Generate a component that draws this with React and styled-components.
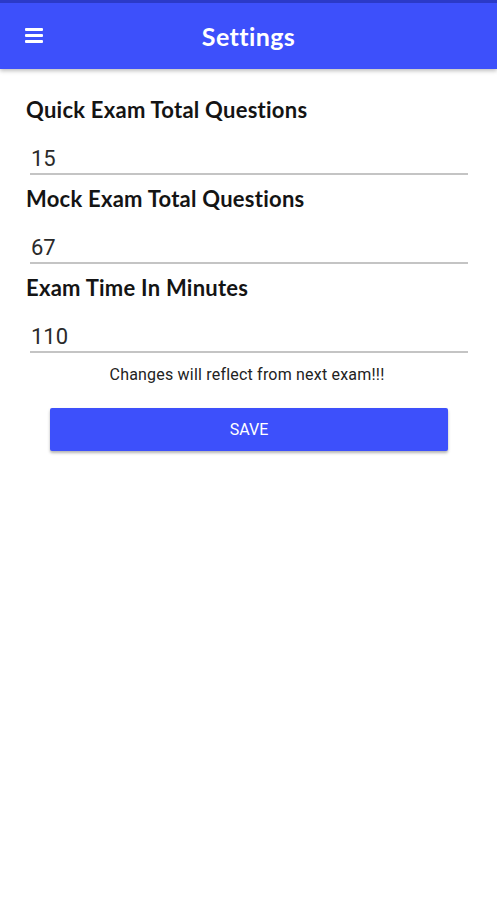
import React, { useState } from 'react';
import styled, { createGlobalStyle } from 'styled-components';

const GlobalStyle = createGlobalStyle`
  body {
    margin: 0;
    background: #fff;
    font-family: Lato, 'Noto Sans', sans-serif;
  }
`;

const fields = [
  { id: 'quick', label: 'Quick Exam Total Questions', value: '15' },
  { id: 'mock', label: 'Mock Exam Total Questions', value: '67' },
  { id: 'time', label: 'Exam Time In Minutes', value: '110' },
];

const App = () => {
  const [values, setValues] = useState(
    Object.fromEntries(fields.map((f) => [f.id, f.value]))
  );

  const handleChange = (e) => {
    setValues({ ...values, [e.target.name]: e.target.value });
  };

  return (
    <Page>
      <GlobalStyle />
      <TopBar>
        <MenuButton aria-label="menu">
          <span />
          <span />
          <span />
        </MenuButton>
        <Title>Settings</Title>
      </TopBar>
      <Form>
        {fields.map((f) => (
          <Field key={f.id}>
            <Label htmlFor={f.id}>{f.label}</Label>
            <Input
              id={f.id}
              name={f.id}
              value={values[f.id]}
              onChange={handleChange}
            />
          </Field>
        ))}
        <Note>Changes will reflect from next exam!!!</Note>
        <SaveButton>SAVE</SaveButton>
      </Form>
    </Page>
  );
};

const Page = styled.div`
  min-height: 900px;
  background: #fff;
`;

const TopBar = styled.header`
  position: relative;
  display: flex;
  align-items: center;
  justify-content: center;
  height: 66px;
  background: #3d50fb;
  border-top: 3px solid #2b3ac8;
  box-shadow: 0 2px 4px rgba(0, 0, 0, 0.25);
`;

const MenuButton = styled.button`
  position: absolute;
  left: 25px;
  top: 25px;
  display: flex;
  flex-direction: column;
  gap: 3px;
  width: 18px;
  padding: 0;
  border: none;
  background: none;

  span {
    display: block;
    height: 3px;
    background: #fff;
    border-radius: 1px;
  }
`;

const Title = styled.h1`
  margin: 0;
  color: #fff;
  font-family: Lato, sans-serif;
  font-weight: 700;
  font-size: 25px;
  letter-spacing: 0.4px;
`;

const Form = styled.main`
  display: flex;
  flex-direction: column;
  padding: 28px 29px 0 26px;
`;

const Field = styled.div`
  display: flex;
  flex-direction: column;
  margin-bottom: 11px;
`;

const Label = styled.label`
  font-family: Lato, sans-serif;
  font-weight: 700;
  font-size: 22px;
  line-height: 26px;
  letter-spacing: 0.25px;
  color: #141414;
`;

const Input = styled.input`
  box-sizing: border-box;
  margin: 16px 0 0 4px;
  padding: 4px 0 0 1px;
  height: 36px;
  border: none;
  border-bottom: 2px solid #c4c4c4;
  outline: none;
  font-family: Roboto, sans-serif;
  font-size: 22px;
  color: #2a2a2a;
  background: transparent;
`;

const Note = styled.p`
  margin: 1px 0 0;
  line-height: 19px;
  text-align: center;
  font-family: Roboto, sans-serif;
  font-size: 16px;
  color: #222;
  letter-spacing: 0.2px;
`;

const SaveButton = styled.button`
  align-self: center;
  width: 398px;
  height: 43px;
  margin: 24px 0 0 4px;
  border: none;
  border-radius: 2px;
  background: #3d50fb;
  color: #fff;
  font-family: Roboto, sans-serif;
  font-size: 16px;
  box-shadow: 0 2px 3px rgba(0, 0, 0, 0.3);
  cursor: pointer;
`;

export default App;
